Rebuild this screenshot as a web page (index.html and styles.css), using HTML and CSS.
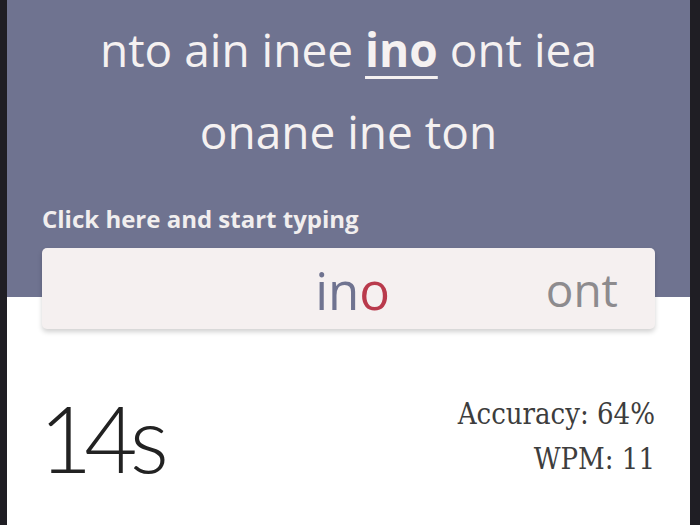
FILE: index.html
```html
<!DOCTYPE html>
<html>
<head>
<meta charset="utf-8">
<link rel="stylesheet" href="styles.css">
</head>
<body>
<div class="app">
  <section class="top">
    <div class="words">
      <div class="line">nto ain inee <span class="current">ino</span> ont iea</div>
      <div class="line">onane ine ton</div>
    </div>
    <div class="label">Click here and start typing</div>
    <div class="input">
      <div class="typed"><span class="ok">in</span><span class="bad">o</span></div>
      <div class="next">ont</div>
    </div>
  </section>
  <section class="stats">
    <div class="timer">14s</div>
    <div class="metrics">
      <div class="metric">Accuracy: 64%</div>
      <div class="metric">WPM: 11</div>
    </div>
  </section>
</div>
</body>
</html>
```
FILE: styles.css
```css
html, body {
  margin: 0;
  padding: 0;
  background: #1f1e24;
  height: 100%;
}
.app {
  margin: 0 10px 0 7px;
  background: #ffffff;
  min-height: 100%;
  font-family: "Open Sans", sans-serif;
}
.top {
  background: #6f7390;
  padding: 8px 35px 0 35px;
  height: 289px;
  box-sizing: content-box;
  display: flex;
  flex-direction: column;
}
.words {
  text-align: center;
  color: #f5f1f1;
  font-size: 46px;
  line-height: 82px;
}
.current {
  font-weight: 700;
  text-decoration: underline;
  text-decoration-thickness: 3px;
  text-underline-offset: 9px;
}
.label {
  margin-top: 32px;
  font-size: 24px;
  line-height: 30px;
  font-weight: 700;
  color: #f1eeee;
}
.input {
  margin-top: 14px;
  height: 81px;
  background: #f5f0f0;
  border-radius: 5px;
  box-shadow: 0 3px 5px rgba(0, 0, 0, 0.18);
  display: flex;
  align-items: center;
  flex-shrink: 0;
}
.typed {
  width: 348px;
  text-align: right;
  font-size: 51px;
  margin-top: 2px;
}
.ok { color: #6f7390; }
.bad { color: #b93a4c; }
.next {
  flex: 1;
  text-align: right;
  padding-right: 37px;
  color: #8d8b8e;
  font-size: 46px;
}
.stats {
  display: flex;
  justify-content: space-between;
  align-items: flex-start;
  padding: 84px 35px 0 35px;
}
.timer {
  font-family: "Lato", sans-serif;
  font-weight: 300;
  font-size: 92px;
  line-height: 100px;
  color: #222222;
  letter-spacing: -8px;
  margin-top: 7px;
  margin-left: -3px;
}
.metrics {
  text-align: right;
  font-family: "DejaVu Serif", serif;
  font-stretch: condensed;
  font-size: 29px;
  line-height: 45px;
  color: #3d3d3d;
  margin-top: 11px;
}
```
